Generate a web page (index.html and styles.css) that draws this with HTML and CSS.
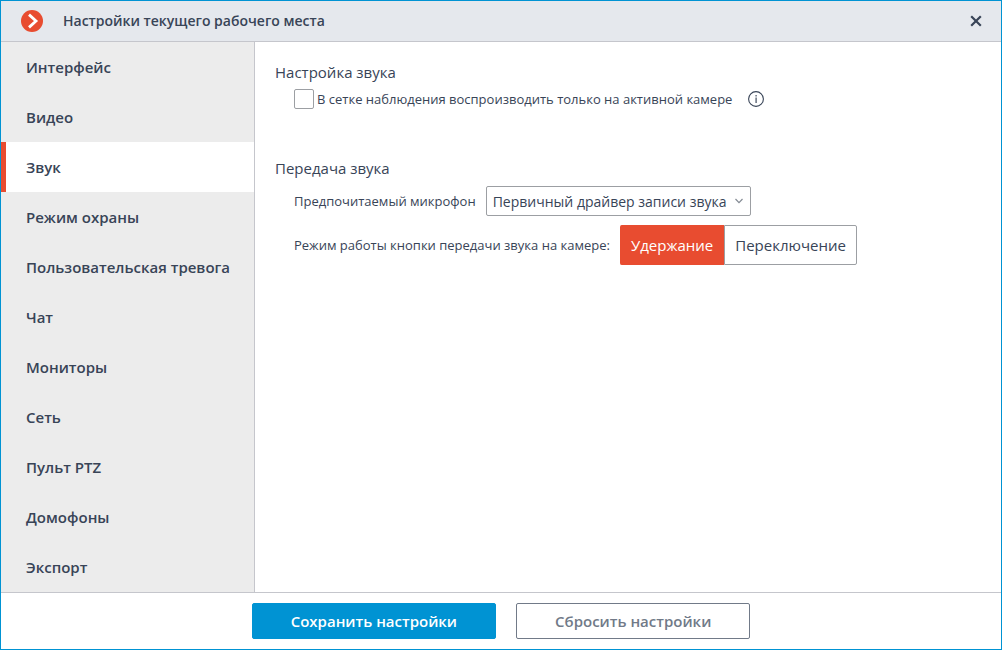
FILE: index.html
```
<!DOCTYPE html>
<html lang="ru">
<head>
<meta charset="utf-8">
<meta name="viewport" content="width=device-width, initial-scale=1">
<title>Настройки текущего рабочего места</title>
<link rel="stylesheet" href="styles.css">
</head>
<body>
<div class="window">
  <header class="titlebar">
    <svg class="logo" viewBox="0 0 22 22" aria-hidden="true">
      <circle cx="11" cy="11" r="11" fill="#e84c30"/>
      <path d="M8 4.6 15 11 8 17.4" fill="none" stroke="#fff" stroke-width="2.8"/>
    </svg>
    <h1 class="title">Настройки текущего рабочего места</h1>
    <button class="close" type="button" aria-label="Закрыть">
      <svg class="close-icon" viewBox="0 0 12 12" aria-hidden="true">
        <path d="M1.2 1.2 10.8 10.8M10.8 1.2 1.2 10.8" fill="none" stroke="#384457" stroke-width="2.2"/>
      </svg>
    </button>
  </header>

  <div class="body">
    <nav class="sidebar">
      <a class="nav-item" href="#interface">Интерфейс</a>
      <a class="nav-item" href="#video">Видео</a>
      <a class="nav-item nav-item-active" href="#sound" aria-current="page">Звук</a>
      <a class="nav-item" href="#guard">Режим охраны</a>
      <a class="nav-item" href="#alarm">Пользовательская тревога</a>
      <a class="nav-item" href="#chat">Чат</a>
      <a class="nav-item" href="#monitors">Мониторы</a>
      <a class="nav-item" href="#network">Сеть</a>
      <a class="nav-item" href="#ptz">Пульт PTZ</a>
      <a class="nav-item" href="#intercoms">Домофоны</a>
      <a class="nav-item" href="#export">Экспорт</a>
    </nav>

    <main class="content">
      <section class="group">
        <h2 class="group-title">Настройка звука</h2>
        <div class="row row-check">
          <input class="checkbox" type="checkbox" id="active-only">
          <label class="check-label" for="active-only">В сетке наблюдения воспроизводить только на активной камере</label>
          <svg class="info" viewBox="0 0 16 16" role="img" aria-label="Справка">
            <circle cx="8" cy="8" r="7.4" fill="none" stroke="#384457" stroke-width="1.1"/>
            <path d="M7.4 4h1.4v1.4H7.4zM7.4 6.6h1.4V12H7.4z" fill="#5b6574"/>
          </svg>
        </div>
      </section>

      <section class="group">
        <h2 class="group-title">Передача звука</h2>
        <div class="row row-select">
          <label class="label" for="microphone">Предпочитаемый микрофон</label>
          <div class="select-wrap">
            <select class="select" id="microphone">
              <option>Первичный драйвер записи звука</option>
            </select>
            <svg class="chevron" viewBox="0 0 8 6" aria-hidden="true">
              <path d="M.5 1 4 4.6 7.5 1" fill="none" stroke="#848b94" stroke-width="1.2"/>
            </svg>
          </div>
        </div>
        <div class="row row-mode">
          <span class="label" id="mode-label">Режим работы кнопки передачи звука на камере:</span>
          <div class="segmented" role="group" aria-labelledby="mode-label">
            <button class="segment segment-active" type="button" aria-pressed="true">Удержание</button>
            <button class="segment" type="button" aria-pressed="false">Переключение</button>
          </div>
        </div>
      </section>
    </main>
  </div>

  <footer class="footer">
    <button class="button button-primary" type="button">Сохранить настройки</button>
    <button class="button button-secondary" type="button">Сбросить настройки</button>
  </footer>
</div>
</body>
</html>
```
FILE: styles.css
```
* {
  box-sizing: border-box;
}

body {
  margin: 0;
  color: #384457;
  background: #fff;
  font-family: "Open Sans", "Noto Sans", sans-serif;
  font-size: 13px;
  line-height: 20px;
}

button,
select {
  font-family: inherit;
  color: inherit;
}

.window {
  display: flex;
  flex-direction: column;
  min-height: 100vh;
  border: 1px solid #0093d3;
}

.titlebar {
  display: flex;
  align-items: center;
  height: 41px;
  padding: 0 16px 0 20px;
  border-bottom: 1px solid #c5c6cc;
  background: #e5e8ed;
}

.logo {
  width: 22px;
  height: 22px;
}

.title {
  flex: 1;
  margin: 0 0 0 20px;
  font-size: 14px;
  font-weight: 600;
}

.close {
  display: flex;
  align-items: center;
  justify-content: center;
  width: 18px;
  height: 24px;
  padding: 0;
  border: 0;
  background: none;
}

.close-icon {
  width: 12px;
  height: 12px;
}

.body {
  display: flex;
  flex: 1;
}

.sidebar {
  display: flex;
  flex-direction: column;
  flex: 0 0 254px;
  border-right: 1px solid #c5c6cc;
  background: #ececec;
}

.nav-item {
  display: flex;
  align-items: center;
  height: 50px;
  padding-left: 20px;
  border-left: 5px solid transparent;
  color: inherit;
  font-size: 15px;
  font-weight: 600;
  text-decoration: none;
}

.nav-item-active {
  border-left-color: #e84c30;
  background: #fff;
}

.content {
  display: flex;
  flex: 1;
  flex-direction: column;
  gap: 49px;
  padding: 20px;
}

.group-title {
  margin: 0;
  font-size: 15px;
  font-weight: 400;
  line-height: 20px;
}

.row {
  display: flex;
  align-items: center;
  padding-left: 19px;
}

.row-check {
  margin-top: 7px;
}

.row-select {
  gap: 10px;
  margin-top: 8px;
}

.row-mode {
  gap: 10px;
  margin-top: 9px;
}

.checkbox {
  appearance: none;
  width: 20px;
  height: 20px;
  margin: 0 3px 0 0;
  border: 1px solid #9c9fa3;
  border-radius: 2px;
  background: #fff;
}

.checkbox:checked {
  background: #0093d3;
}

.info {
  width: 16px;
  height: 16px;
  margin-left: 16px;
}

.select-wrap {
  position: relative;
}

.select {
  appearance: none;
  display: block;
  width: 265px;
  height: 30px;
  padding: 0 20px 0 6px;
  border: 1px solid #9c9fa3;
  border-radius: 2px;
  background: #fff;
  font-size: 14px;
}

.chevron {
  position: absolute;
  top: 12px;
  right: 8px;
  width: 8px;
  height: 6px;
  pointer-events: none;
}

.segmented {
  display: flex;
}

.segment {
  height: 40px;
  padding: 0 10px;
  border: 1px solid #9c9fa3;
  border-left: 0;
  border-radius: 0 2px 2px 0;
  background: #fff;
  font-size: 15px;
}

.segment-active {
  padding: 0 11px;
  border-color: #e84c30;
  border-right: 0;
  border-radius: 2px 0 0 2px;
  background: #e84c30;
  color: #fff;
}

.segment-active + .segment {
  border-left: 1px solid #9c9fa3;
}

.footer {
  display: flex;
  justify-content: center;
  gap: 20px;
  padding: 10px;
  border-top: 1px solid #c5c6cc;
}

.button {
  height: 36px;
  padding: 0 38px;
  border: 1px solid #717a88;
  border-radius: 2px;
  background: #fff;
  color: #717a88;
  font-size: 15px;
  font-weight: 600;
}

.button-primary {
  border-color: #0093d3;
  background: #0093d3;
  color: #fff;
}
```
